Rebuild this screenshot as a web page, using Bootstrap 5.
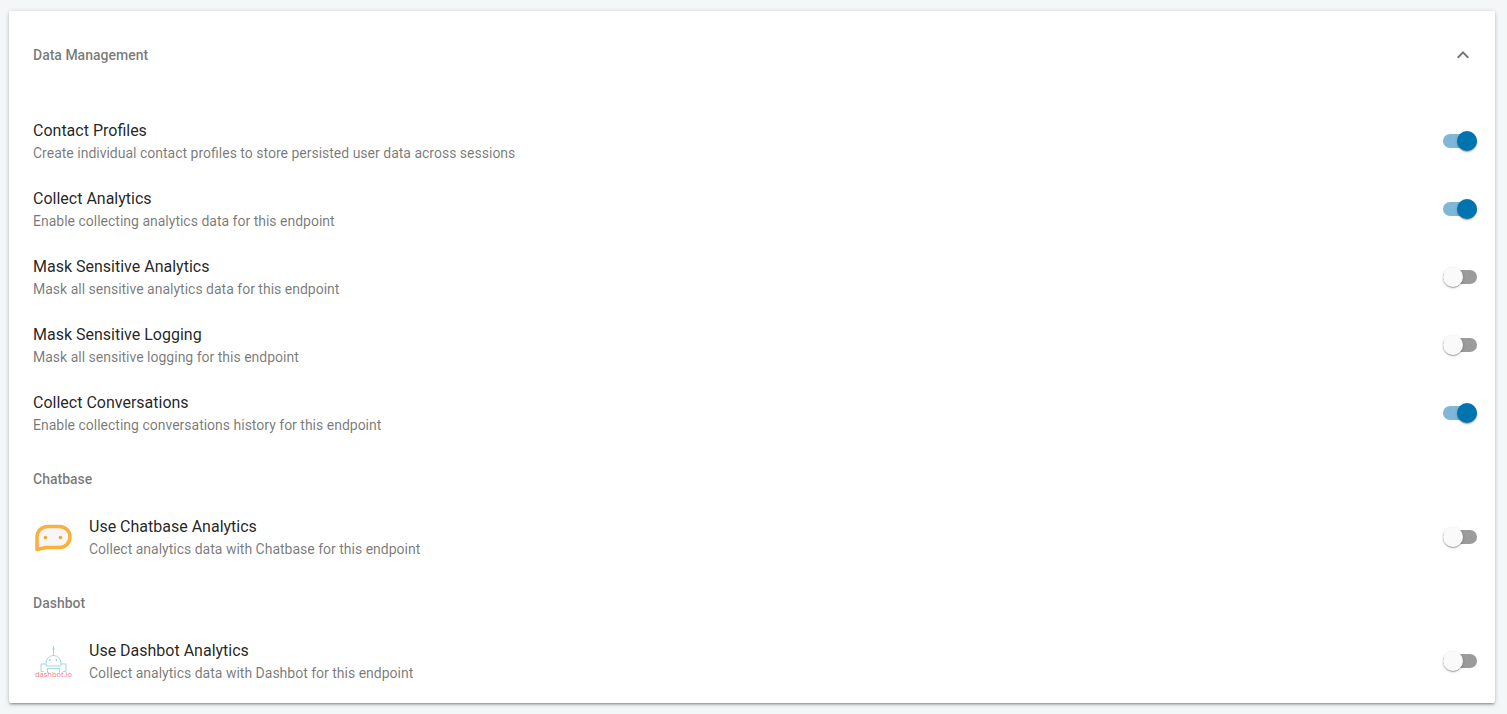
<!DOCTYPE html>
<html lang="en">
<head>
<meta charset="utf-8">
<title>Data Management</title>
<link href="https://cdn.jsdelivr.net/npm/bootstrap@5.3.0/dist/css/bootstrap.min.css" rel="stylesheet">
<style>
html, body { height: 100%; }
body { background: #f3f7f8; font-family: Roboto, "Liberation Sans", sans-serif; color: rgba(0,0,0,.87); overflow: hidden; }
.panel-wrap { padding: 11px 12px 0 9px; }
.panel-box { background: #fff; height: 692px; border: 0; border-radius: 2px; box-shadow: 0 1px 5px rgba(0,0,0,.2), 0 2px 2px rgba(0,0,0,.14), 0 3px 1px -2px rgba(0,0,0,.12); }
.panel-head { height: 88px; padding: 0 24px; }
.panel-title { font-size: 14px; font-weight: 500; color: rgba(0,0,0,.54); line-height: 20px; }
.panel-body { padding: 8px 0; }
.sect-head { height: 48px; margin-top: 8px; padding: 0 24px; font-size: 14px; font-weight: 500; color: rgba(0,0,0,.54); }
.opt-row { height: 68px; padding: 0 18px 0 24px; }
.opt-icon { width: 40px; height: 40px; margin-right: 16px; flex: none; margin-top: -1px; }
.opt-text { padding-top: 1px; }
.opt-name { font-size: 16px; line-height: 24px; color: rgba(0,0,0,.87); }
.opt-desc { font-size: 14px; line-height: 20px; margin-bottom: 1px; color: rgba(0,0,0,.54); }
.tog { position: relative; width: 34px; height: 14px; border-radius: 7px; background: #9b9b9b; flex: none; }
.tog::after { content: ""; position: absolute; top: -3px; left: 0; width: 20px; height: 20px; border-radius: 50%; background: #fafafa; box-shadow: 0 1px 3px rgba(0,0,0,.2), 0 1px 1px rgba(0,0,0,.14), 0 2px 1px -1px rgba(0,0,0,.12); }
.tog-on { background: #7fb7d6; }
.tog-on::after { left: 14px; background: #0073b1; }
.logo-text { font-family: "Open Sans", sans-serif; font-size: 7.500px; fill: #f27c7e; }
</style>
</head>
<body>
<div class="panel-wrap">
  <div class="panel-box card">
    <div class="panel-head d-flex align-items-center justify-content-between">
      <div class="panel-title">Data Management</div>
      <svg width="24" height="24" viewBox="0 0 24 24" fill="#757575" style="margin-right:-4px" aria-hidden="true"><path d="M7.41 15.41 12 10.83l4.59 4.58L18 14l-6-6-6 6z"/></svg>
    </div>
    <div class="panel-body">
      <div class="opt-row d-flex align-items-center justify-content-between">
        <div class="opt-text"><div class="opt-name">Contact Profiles</div><div class="opt-desc">Create individual contact profiles to store persisted user data across sessions</div></div>
        <div class="tog tog-on"></div>
      </div>
      <div class="opt-row d-flex align-items-center justify-content-between">
        <div class="opt-text"><div class="opt-name">Collect Analytics</div><div class="opt-desc">Enable collecting analytics data for this endpoint</div></div>
        <div class="tog tog-on"></div>
      </div>
      <div class="opt-row d-flex align-items-center justify-content-between">
        <div class="opt-text"><div class="opt-name">Mask Sensitive Analytics</div><div class="opt-desc">Mask all sensitive analytics data for this endpoint</div></div>
        <div class="tog"></div>
      </div>
      <div class="opt-row d-flex align-items-center justify-content-between">
        <div class="opt-text"><div class="opt-name">Mask Sensitive Logging</div><div class="opt-desc">Mask all sensitive logging for this endpoint</div></div>
        <div class="tog"></div>
      </div>
      <div class="opt-row d-flex align-items-center justify-content-between">
        <div class="opt-text"><div class="opt-name">Collect Conversations</div><div class="opt-desc">Enable collecting conversations history for this endpoint</div></div>
        <div class="tog tog-on"></div>
      </div>
      <div class="sect-head d-flex align-items-center">Chatbase</div>
      <div class="opt-row d-flex align-items-center justify-content-between">
        <div class="d-flex align-items-center">
          <svg class="opt-icon" viewBox="0 0 40 40" aria-hidden="true">
            <path d="M14.500 9.500h12a10.500 10.500 0 0 1 0 21H13L4 32.500V20A10.500 10.500 0 0 1 14.500 9.500z" fill="#f6f6f6" stroke="#fbb03b" stroke-width="3.500" stroke-linejoin="round"/>
            <circle cx="12.500" cy="20.500" r="1.800" fill="#f0a92e"/><circle cx="27.500" cy="20.500" r="1.800" fill="#f0a92e"/>
          </svg>
          <div class="opt-text"><div class="opt-name">Use Chatbase Analytics</div><div class="opt-desc">Collect analytics data with Chatbase for this endpoint</div></div>
        </div>
        <div class="tog"></div>
      </div>
      <div class="sect-head d-flex align-items-center">Dashbot</div>
      <div class="opt-row d-flex align-items-center justify-content-between">
        <div class="d-flex align-items-center">
          <svg class="opt-icon" viewBox="0 0 40 40" aria-hidden="true">
            <g fill="none" stroke="#98d6d9" stroke-width=".9">
              <path d="M20.500 5v10M19 8h3"/>
              <path d="M13 25v-3a7.500 7.500 0 0 1 15 0v3z"/>
              <path d="M13 23H8v7.500h3M28 23h5v7.500h-3M14 27.500h13M14.500 27.500v4M26.500 27.500v4"/>
            </g>
            <circle cx="17" cy="19" r=".9" fill="#98d6d9"/><circle cx="23.500" cy="19" r=".9" fill="#98d6d9"/>
            <text class="logo-text" x="20.500" y="36" text-anchor="middle" textLength="37">dashbot.io</text>
          </svg>
          <div class="opt-text"><div class="opt-name">Use Dashbot Analytics</div><div class="opt-desc">Collect analytics data with Dashbot for this endpoint</div></div>
        </div>
        <div class="tog"></div>
      </div>
    </div>
  </div>
</div>
<script src="https://cdn.jsdelivr.net/npm/bootstrap@5.3.0/dist/js/bootstrap.bundle.min.js"></script>
</body>
</html>
